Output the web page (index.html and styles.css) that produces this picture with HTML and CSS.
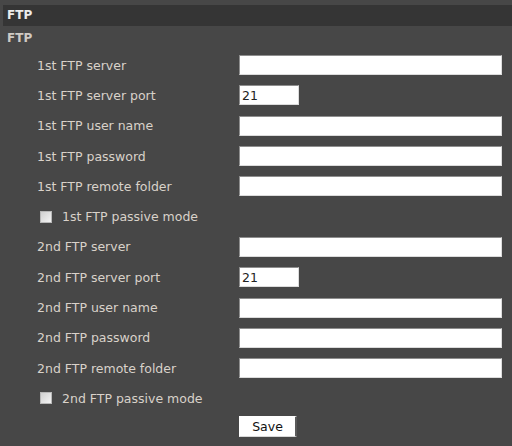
FILE: index.html
```html
<!DOCTYPE html>
<html>
<head>
<meta charset="utf-8">
<link rel="stylesheet" href="styles.css">
</head>
<body>
<div class="page">
  <div class="titlebar">FTP</div>
  <div class="section">FTP</div>
  <div class="form">
    <div class="row"><span class="label">1st FTP server</span><input class="text wide" type="text"></div>
    <div class="row"><span class="label">1st FTP server port</span><input class="text port" type="text" value="21"></div>
    <div class="row"><span class="label">1st FTP user name</span><input class="text wide" type="text"></div>
    <div class="row"><span class="label">1st FTP password</span><input class="text wide" type="password"></div>
    <div class="row"><span class="label">1st FTP remote folder</span><input class="text wide" type="text"></div>
    <div class="row check"><span class="box"></span><span class="clabel">1st FTP passive mode</span></div>
    <div class="row"><span class="label">2nd FTP server</span><input class="text wide" type="text"></div>
    <div class="row"><span class="label">2nd FTP server port</span><input class="text port" type="text" value="21"></div>
    <div class="row"><span class="label">2nd FTP user name</span><input class="text wide" type="text"></div>
    <div class="row"><span class="label">2nd FTP password</span><input class="text wide" type="password"></div>
    <div class="row"><span class="label">2nd FTP remote folder</span><input class="text wide" type="text"></div>
    <div class="row check"><span class="box"></span><span class="clabel">2nd FTP passive mode</span></div>
    <div class="save"><button class="btn" type="button">Save</button></div>
  </div>
</div>
</body>
</html>
```
FILE: styles.css
```css
html, body {
  margin: 0;
  padding: 0;
  background: #474747;
}
body {
  font-family: "DejaVu Sans", Verdana, sans-serif;
  font-size: 12.5px;
  color: #d9d2ca;
}
.page {
  width: 512px;
  height: 446px;
  overflow: hidden;
  padding-top: 5px;
  box-sizing: border-box;
}
.titlebar {
  margin-left: 3px;
  height: 21px;
  line-height: 21px;
  background: #353535;
  color: #ececec;
  padding-left: 4px;
  font-size: 12px;
  font-weight: bold;
}
.section {
  height: 24px;
  line-height: 24px;
  padding-left: 7px;
  font-weight: bold;
  color: #cfcac4;
  font-size: 12px;
}
.form {
  display: flex;
  flex-direction: column;
}
.row {
  height: 30.3px;
  display: flex;
  align-items: center;
  padding-left: 37px;
}
.label {
  width: 202px;
  flex: none;
}
.text {
  box-sizing: border-box;
  height: 20px;
  margin: 0;
  padding: 1px 2px;
  background: #fff;
  border: 1px solid;
  border-color: #8e8e8e #dcdcdc #dcdcdc #8e8e8e;
  font-family: "DejaVu Sans", Verdana, sans-serif;
  font-size: 12.5px;
  color: #222;
}
.wide { width: 263px; }
.port { width: 60px; }
.check { padding-left: 40px; }
.box {
  width: 10px;
  height: 10px;
  border: 1px solid #b8b8b8;
  background: linear-gradient(135deg, #d0d0d0, #f4f4f4);
  margin-right: 10px;
  flex: none;
}
.save {
  padding-left: 239px;
  padding-top: 2px;
}
.btn {
  width: 58px;
  height: 21px;
  margin: 0;
  padding: 0;
  background: #fff;
  border: 1px solid #fff;
  border-right: 2px solid #5a5a5a;
  border-bottom: 1px solid #d8d8d8;
  font-family: "DejaVu Sans", Verdana, sans-serif;
  font-size: 12.5px;
  color: #111;
}
```
